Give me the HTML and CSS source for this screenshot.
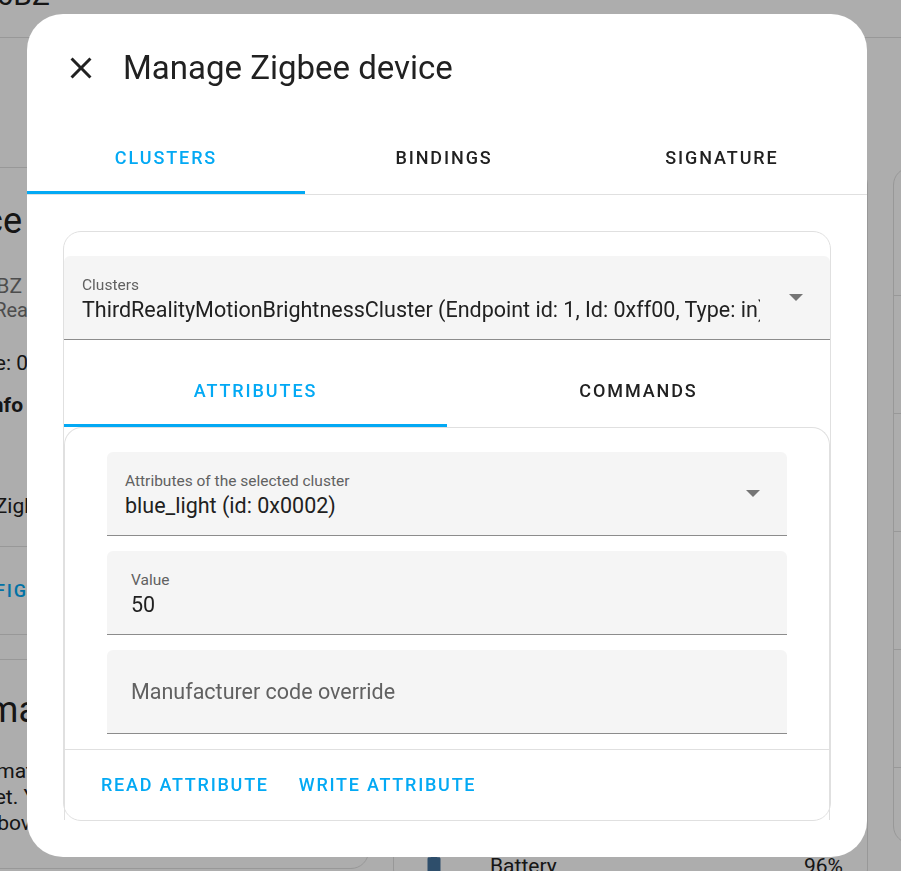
FILE: index.html
```html
<!DOCTYPE html>
<html lang="en">
<head>
<meta charset="utf-8">
<title>Manage Zigbee device</title>
<link rel="stylesheet" href="styles.css">
</head>
<body>
<div class="page">
  <header class="topbar"><div class="tb-title"><span>3RMS16BZ</span></div></header>
  <main class="main">
    <div class="col col-left">
      <section class="bgcard card-device">
        <div class="ln ln-heading w22"><span>Device</span></div>
        <div class="ln ln-sub w22 mt33"><span>3RMS16BZ</span></div>
        <div class="ln ln-sub2 w27"><span>by Third Rea</span></div>
        <div class="ln ln-text w27 mt29"><span>Firmware: 0</span></div>
        <div class="ln ln-bold w23 mt18"><span>Zigbee info</span></div>
        <div class="ln ln-text w36 mt77"><span>Zigb</span></div>
        <div class="bg-actions"><div class="ln ln-btn w27"><span>CONFIG</span></div></div>
      </section>
      <section class="bgcard card-auto">
        <div class="ln ln-heading w38"><span>Automa</span></div>
        <div class="para">
          <div class="ln ln-para w33"><span>Information mat</span></div>
          <div class="ln ln-para w36"><span>yet. Y</span></div>
          <div class="ln ln-para w42"><span>above</span></div>
        </div>
      </section>
    </div>
    <div class="col col-mid">
      <section class="bgcard card-mid">
        <div class="entity-row">
          <svg class="bat" viewBox="0 0 24 24"><path d="M16.67,4H15V2H9V4H7.33A1.33,1.33 0 0,0 6,5.33V20.67C6,21.4 6.6,22 7.33,22H16.67A1.33,1.33 0 0,0 18,20.67V5.33C18,4.6 17.4,4 16.67,4Z"/></svg>
          <span class="entity-name">Battery</span>
          <span class="entity-state">96%</span>
        </div>
      </section>
    </div>
    <div class="col col-right">
      <section class="bgcard card-right">
        <div class="rrow rrow-first"></div>
        <div class="rrow"></div>
        <div class="rrow"></div>
        <div class="rrow"></div>
        <div class="rrow"></div>
        <div class="rrow rrow-last"></div>
      </section>
    </div>
  </main>
</div>

<div class="scrim"></div>

<div class="overlay">
  <div class="dialog" role="dialog">
    <div class="dlg-header">
      <svg class="close" viewBox="0 0 24 24"><path d="M19,6.41L17.59,5L12,10.59L6.41,5L5,6.41L10.59,12L5,17.59L6.41,19L12,13.41L17.59,19L19,17.59L13.41,12L19,6.41Z"/></svg>
      <h2 class="dlg-title">Manage Zigbee device</h2>
    </div>
    <div class="main-tabs">
      <div class="tabs">
        <div class="tab active">Clusters</div>
        <div class="tab">Bindings</div>
        <div class="tab">Signature</div>
      </div>
    </div>
    <div class="dlg-body">
      <div class="card">
        <div class="field select">
          <div class="field-text">
            <div class="field-label">Clusters</div>
            <div class="field-value">ThirdRealityMotionBrightnessCluster (Endpoint id: 1, Id: 0xff00, Type: in)</div>
          </div>
          <span class="arrow"></span>
        </div>
        <div class="tabs sub-tabs">
          <div class="tab active">Attributes</div>
          <div class="tab">Commands</div>
        </div>
        <div class="inner">
          <div class="inner-fields">
            <div class="field select">
              <div class="field-text">
                <div class="field-label">Attributes of the selected cluster</div>
                <div class="field-value">blue_light (id: 0x0002)</div>
              </div>
              <span class="arrow"></span>
            </div>
            <div class="field textfield">
              <div class="field-text">
                <div class="field-label">Value</div>
                <div class="field-value">50</div>
              </div>
            </div>
            <div class="field placeholder">Manufacturer code override</div>
          </div>
          <div class="actions">
            <button class="btn">Read attribute</button>
            <button class="btn">Write attribute</button>
          </div>
        </div>
      </div>
    </div>
  </div>
</div>
</body>
</html>
```

FILE: styles.css
```css
* { box-sizing: border-box; }
html, body { margin: 0; padding: 0; }
body {
  width: 901px;
  height: 871px;
  overflow: hidden;
  background: #fff;
  font-family: Roboto, "Noto Sans", sans-serif;
  color: #212121;
}

/* ---------- background page ---------- */
.page { width: 1400px; margin-left: -40px; }
.topbar {
  height: 38px;
  border-bottom: 1px solid #e0e0e0;
  display: flex;
  padding-left: 40px;
}
.tb-title {
  width: 50px;
  height: 30px;
  margin-top: -20px;
  display: flex;
  justify-content: flex-end;
  white-space: nowrap;
  font-size: 30px;
  line-height: 30px;
  color: #212121;
}
.main { display: flex; padding-top: 129px; align-items: flex-start; }
.col-left { width: 409px; flex: none; }
.col-mid { width: 475px; margin-left: 24px; flex: none; }
.col-right { width: 400px; margin-left: 25px; flex: none; }

.bgcard { border: 1px solid #e0e0e0; border-radius: 18px; background: #fff; }
.ln { display: flex; justify-content: flex-end; white-space: nowrap; margin-left: 39px; }
.ln span { flex: none; }
.w22 { width: 22px; }
.w23 { width: 23px; }
.w27 { width: 28px; }
.w33 { width: 33px; }
.w36 { width: 36px; }
.w38 { width: 38px; }
.w42 { width: 42px; }
.mt18 { margin-top: 18px; }
.mt29 { margin-top: 29px; }
.mt33 { margin-top: 33px; }
.mt77 { margin-top: 77px; }

.card-device { padding-top: 33px; }
.ln-heading { font-size: 36px; line-height: 40px; color: #212121; }
.ln-sub { font-size: 21px; line-height: 24px; color: #727272; }
.ln-sub2 { font-size: 20px; line-height: 24px; color: #727272; }
.ln-text { font-size: 21px; line-height: 24px; color: #212121; }
.ln-bold { font-size: 21px; line-height: 24px; font-weight: 700; color: #212121; }
.bg-actions {
  margin-top: 28px;
  border-top: 1px solid #e0e0e0;
  padding: 32px 0 31px;
}
.ln-btn { font-size: 18px; line-height: 24px; font-weight: 500; letter-spacing: 1.9px; color: #03a9f4; }

.card-auto { margin-top: 24px; padding: 30px 0 32px; }
.para { margin-top: 28px; }
.ln-para { font-size: 21px; line-height: 26px; color: #212121; }

.card-mid { height: 720px; padding: 678px 24px 0 27px; }
.entity-row { display: flex; align-items: center; height: 40px; font-size: 21px; color: #212121; }
.bat { width: 26px; height: 26px; fill: #44739e; flex: none; margin-right: 43px; }
.entity-name { flex: 1; }
.entity-state { flex: none; }

.card-right { overflow: hidden; }
.rrow { height: 118px; border-bottom: 1px solid #e0e0e0; }
.rrow-first { height: 128px; }
.rrow-last { height: 75px; border-bottom: none; }

/* ---------- scrim + dialog ---------- */
.scrim { position: fixed; inset: 0; background: rgba(0, 0, 0, 0.32); }
.overlay {
  position: fixed;
  inset: 0;
  display: flex;
  align-items: center;
  justify-content: center;
  padding-right: 7px;
}
.dialog {
  width: 840px;
  height: 843px;
  background: #fff;
  border-radius: 36px;
  display: flex;
  flex-direction: column;
  overflow: hidden;
}
.dlg-header {
  display: flex;
  align-items: center;
  gap: 24px;
  padding: 36px 24px 35px 36px;
}
.close { width: 36px; height: 36px; fill: #212121; flex: none; }
.dlg-title {
  margin: 0;
  font-size: 33px;
  line-height: 36px;
  font-weight: 400;
  color: #212121;
}

.tabs { display: flex; }
.main-tabs { border-bottom: 1px solid #e0e0e0; padding-right: 6px; }
.tab {
  flex: 1;
  height: 73px;
  display: flex;
  align-items: center;
  justify-content: center;
  position: relative;
  font-size: 18px;
  font-weight: 500;
  letter-spacing: 1.9px;
  text-transform: uppercase;
  color: #212121;
}
.tab.active { color: #03a9f4; }
.tab.active::after {
  content: "";
  position: absolute;
  left: 0;
  right: 0;
  bottom: 0;
  height: 3px;
  background: #03a9f4;
}

.dlg-body { padding: 36px; }
.card {
  border: 1px solid #e0e0e0;
  border-radius: 18px;
  padding-top: 24px;
}
.field {
  display: flex;
  height: 84px;
  background: #f5f5f5;
  border-bottom: 1px solid #8c8c8c;
  border-radius: 6px 6px 0 0;
}
.field-text { flex: 1; min-width: 0; padding: 18px 0 0 18px; }
.select .field-text { margin-right: 29px; }
.textfield .field-text { padding-left: 24px; }
.field-label { font-size: 15.5px; line-height: 22px; color: #616161; white-space: nowrap; }
.field-value {
  font-size: 21.5px;
  line-height: 28px;
  color: #212121;
  white-space: nowrap;
  overflow: hidden;
}
.arrow {
  align-self: center;
  flex: none;
  width: 0;
  height: 0;
  border-left: 7.5px solid transparent;
  border-right: 7.5px solid transparent;
  border-top: 7.5px solid #757575;
  margin-right: 27.5px;
}
.placeholder {
  align-items: center;
  padding-left: 24px;
  font-size: 21.5px;
  color: #616161;
}

.sub-tabs { margin-top: 14px; }
.inner {
  border: 1px solid #e0e0e0;
  border-bottom: none;
  border-radius: 18px 18px 0 0;
}
.inner-fields {
  padding: 24px 42px 15px;
  display: flex;
  flex-direction: column;
  gap: 15px;
}
.actions {
  border-top: 1px solid #e0e0e0;
  height: 71px;
  display: flex;
  align-items: center;
  padding: 0 24px 2px;
  gap: 6px;
}
.btn {
  font-family: inherit;
  background: none;
  border: 0;
  padding: 0 12px;
  height: 54px;
  font-size: 18px;
  font-weight: 500;
  letter-spacing: 1.75px;
  color: #03a9f4;
  text-transform: uppercase;
  cursor: pointer;
}
```
